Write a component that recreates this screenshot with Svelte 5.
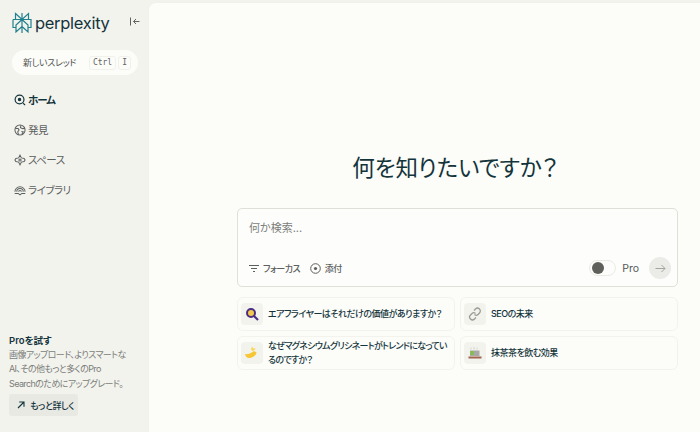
<script>
  const nav = [
    { label: "ホーム", icon: "home", active: true },
    { label: "発見", icon: "globe" },
    { label: "スペース", icon: "space" },
    { label: "ライブラリ", icon: "library" }
  ];

  const suggestions = [
    { text: "エアフライヤーはそれだけの価値がありますか？", icon: "search" },
    { text: "SEOの未来", icon: "link" },
    { text: "なぜマグネシウムグリシネートがトレンドになっているのですか？", icon: "banana", tight: true },
    { text: "抹茶茶を飲む効果", icon: "tea" }
  ];
</script>

<div class="layout">
  <aside class="sidebar">
    <div class="brand">
      <svg class="logo" width="20" height="22" viewBox="0 0 20 22" fill="none" stroke="#20808d" stroke-width="1.200">
        <path d="M10 1v20M3.500 1.500L10 7.500l6.500-6V7.500H3.500zM1 7.500h18v8h-3M1 7.500v8h3M10 7.500L4 13v7l6-5.500M10 7.500L16 13v7l-6-5.500" />
      </svg>
      <span class="wordmark">perplexity</span>
      <svg class="collapse" width="10" height="9" viewBox="0 0 10 9" fill="none" stroke="#5f6260" stroke-width="1">
        <path d="M0.500 0.500v8M9.500 4.500H3.500M6 2L3.500 4.500 6 7" />
      </svg>
    </div>

    <button class="new-thread">
      <span>新しいスレッド</span>
      <span class="keys"><kbd>Ctrl</kbd><kbd>I</kbd></span>
    </button>

    <nav>
      {#each nav as item}
        <div class="nav-item" class:active={item.active}>
          <svg width="12" height="12" viewBox="0 0 13 13" fill="none" stroke="currentColor" stroke-width="1.100">
            {#if item.icon === "home"}
              <circle cx="6" cy="6" r="4.800" stroke-width="1.300" />
              <circle cx="6" cy="6" r="1.300" fill="currentColor" />
              <path d="M10 10l2 2" stroke-width="1.300" />
            {:else if item.icon === "globe"}
              <circle cx="6.500" cy="6.500" r="5.500" />
              <path d="M1.500 5h3l1 1.500-1.500 2 1 3M7.500 1.500L7 4l2.500 1 2.500-.5M8 8l2 .5-1.500 2.500" />
            {:else if item.icon === "space"}
              <path d="M6.500 1.200L8 4.200l3 .6 1 1.700-1 1.700-3 .6-1.500 3-1.500-3-3-.6-1-1.700 1-1.700 3-.6z" />
              <circle cx="6.500" cy="6.500" r="1.200" />
            {:else}
              <path d="M1 8.500a5.500 5.500 0 0 1 11 0M3 8.500a3.500 3.500 0 0 1 7 0M5 8.500a1.500 1.500 0 0 1 3 0" />
              <path d="M0.800 10.200h3.700l2 1.600 2-1.600h3.700" />
            {/if}
          </svg>
          <span>{item.label}</span>
        </div>
      {/each}
    </nav>

    <div class="promo">
      <strong>Proを試す</strong>
      <p>画像アップロード、よりスマートなAI、その他もっと多くのPro<br />Searchのためにアップグレード。</p>
      <button class="learn">
        <svg width="8" height="8" viewBox="0 0 8 8" fill="none" stroke="currentColor" stroke-width="1.100">
          <path d="M1 7l6-6M2.200 1H7v4.800" />
        </svg>
        もっと詳しく
      </button>
    </div>
  </aside>

  <main class="main">
    <h1>何を知りたいですか？</h1>

    <div class="search">
      <div class="placeholder">何か検索...</div>
      <div class="toolbar">
        <span class="tool">
          <svg width="10" height="9" viewBox="0 0 10 9" fill="none" stroke="currentColor" stroke-width="1">
            <path d="M0 1.500h10M2 4.500h6M4 7.500h2" />
          </svg>
          フォーカス
        </span>
        <span class="tool">
          <svg width="11" height="11" viewBox="0 0 11 11" fill="none" stroke="currentColor" stroke-width="1">
            <circle cx="5.500" cy="5.500" r="4.800" />
            <circle cx="5.500" cy="5.500" r="1.600" fill="currentColor" stroke="none" />
          </svg>
          添付
        </span>
        <span class="spacer"></span>
        <span class="toggle"><span class="knob"></span></span>
        <span class="pro">Pro</span>
        <span class="send">
          <svg width="11" height="9" viewBox="0 0 11 9" fill="none" stroke="#a3a59f" stroke-width="1">
            <path d="M0.500 4.500h9.500M6.500 1l3.500 3.500L6.500 8" />
          </svg>
        </span>
      </div>
    </div>

    <div class="suggestions">
      {#each suggestions as s}
        <div class="chip">
          <span class="chip-icon">
            {#if s.icon === "search"}
              <svg width="14" height="14" viewBox="0 0 14 14" fill="none">
                <circle cx="6" cy="6" r="4" fill="#f2c94c" stroke="#4b2e83" stroke-width="2" />
                <path d="M9 9l4 4" stroke="#4b2e83" stroke-width="2.200" />
              </svg>
            {:else if s.icon === "link"}
              <svg width="14" height="14" viewBox="0 0 14 14" fill="none" stroke="#9a9c98" stroke-width="1.300">
                <path d="M6 3.500l1.500-1.500a2.500 2.500 0 0 1 4 4L10 7.500a2.500 2.500 0 0 1-3.500 0" />
                <path d="M8 10.500L6.500 12a2.500 2.500 0 0 1-4-4L4 6.500a2.500 2.500 0 0 1 3.500 0" />
              </svg>
            {:else if s.icon === "banana"}
              <svg width="16" height="14" viewBox="0 0 16 14">
                <path d="M1 8c3 .5 6-.5 9-3l2.500 1.500c.5 2-4 6-8 5.500C2.500 11.800 1.500 10 1 8z" fill="#f6c634" />
                <path d="M7 3l1-2.500L9.500 2.500 12 2.500 10 4.500 8 5z" fill="#f9d65c" />
              </svg>
            {:else}
              <svg width="14" height="14" viewBox="0 0 14 14" fill="none">
                <path d="M3 1.500v2M6 1v2.500M9 1.500v2" stroke="#d5d5d0" />
                <rect x="2" y="4.500" width="9.500" height="5.500" fill="#a8a9a4" />
                <rect x="2.500" y="5" width="3" height="4" fill="#7fc241" />
                <rect x="0.500" y="10.500" width="13" height="2" fill="#a0654f" />
              </svg>
            {/if}
          </span>
          <span class="chip-text" class:tight={s.tight}>{s.text}</span>
        </div>
      {/each}
    </div>
  </main>
</div>

<style>
  :global(body) {
    margin: 0;
    background-color: #f3f3ee;
    font-family: "Inter", "Noto Sans CJK JP", sans-serif;
    font-feature-settings: "palt";
  }

  .layout {
    display: flex;
    width: 700px;
    height: 432px;
    overflow: hidden;
  }

  .sidebar {
    display: flex;
    flex-direction: column;
    width: 149px;
    flex-shrink: 0;
    box-sizing: border-box;
    padding: 11px 12px 16px 12px;
  }

  .brand {
    display: flex;
    align-items: center;
    height: 24px;
  }

  .logo {
    flex-shrink: 0;
  }

  .wordmark {
    margin-left: 3px;
    font-size: 16.500px;
    color: #13343b;
    letter-spacing: -0.3px;
  }

  .collapse {
    margin-left: auto;
    margin-right: -3px;
    margin-bottom: 3px;
  }

  .new-thread {
    display: flex;
    align-items: center;
    justify-content: space-between;
    width: 126px;
    height: 25px;
    margin-top: 15px;
    padding: 0 7px 0 11px;
    border: none;
    border-radius: 13px;
    background-color: #fcfcf9;
    color: #4f5452;
    font-family: inherit;
    font-feature-settings: inherit;
    font-size: 9px;
    letter-spacing: -0.3px;
  }

  .keys {
    display: flex;
    gap: 2px;
  }

  kbd {
    padding: 1px 3px;
    border: 1px solid #f1f1ec;
    border-radius: 3px;
    font-family: "DejaVu Sans Mono", monospace;
    font-size: 8px;
    letter-spacing: 0;
    line-height: 10px;
    color: #5f6260;
  }

  nav {
    display: flex;
    flex-direction: column;
    gap: 11px;
    margin-top: 15px;
    margin-left: 2px;
  }

  .nav-item {
    display: flex;
    align-items: center;
    gap: 2px;
    height: 19px;
    font-size: 10.500px;
    letter-spacing: -0.5px;
    color: #5b605e;
  }

  .nav-item.active {
    color: #13343b;
    font-weight: 700;
    letter-spacing: -1px;
  }

  .promo {
    margin-top: auto;
    margin-left: -3px;
  }

  .promo strong {
    display: block;
    font-size: 9.500px;
    line-height: 14px;
    font-weight: 600;
    color: #13343b;
  }

  .promo p {
    width: 122px;
    margin: 0;
    font-size: 9px;
    letter-spacing: -0.6px;
    line-height: 14.300px;
    color: #7a7d79;
  }

  .learn {
    display: flex;
    align-items: center;
    gap: 5px;
    height: 22px;
    margin-top: 3px;
    padding: 0 4px 0 8px;
    border: none;
    border-radius: 3px;
    background-color: #e9e9e4;
    color: #13343b;
    font-family: inherit;
    font-feature-settings: inherit;
    font-size: 9px;
    letter-spacing: -0.4px;
    font-weight: 500;
  }

  .main {
    flex: 1;
    margin-top: 3px;
    box-sizing: border-box;
    padding: 0 22px 0 88px;
    background-color: #fcfcf9;
    border-top-left-radius: 6px;
    box-shadow: 0 0 1px rgba(0, 0, 0, 0.08);
  }

  h1 {
    margin: 147px 0 0;
    padding-right: 5px;
    text-align: center;
    font-size: 22.500px;
    line-height: 36px;
    font-weight: 400;
    color: #13343b;
  }

  .search {
    display: flex;
    flex-direction: column;
    justify-content: space-between;
    box-sizing: border-box;
    height: 79px;
    margin-top: 22px;
    padding: 11px 6px 7px 11px;
    border: 1.500px solid #dfe0d8;
    border-radius: 5px;
    background-color: #fdfdfb;
  }

  .placeholder {
    font-size: 11px;
    line-height: 16px;
    color: #7b7e7a;
  }

  .toolbar {
    display: flex;
    align-items: center;
    gap: 10px;
  }

  .tool {
    display: flex;
    align-items: center;
    gap: 4px;
    font-size: 9px;
    letter-spacing: -0.6px;
    font-weight: 500;
    color: #5b605e;
  }

  .spacer {
    flex: 1;
  }

  .toggle {
    display: flex;
    align-items: center;
    width: 27px;
    height: 16px;
    box-sizing: border-box;
    padding-left: 2px;
    border: 1px solid #ebebe5;
    border-radius: 8px;
    margin-right: -4px;
  }

  .knob {
    width: 12px;
    height: 12px;
    border-radius: 50%;
    background-color: #5f605c;
  }

  .pro {
    font-size: 10.500px;
    color: #555a58;
  }

  .send {
    display: flex;
    align-items: center;
    justify-content: center;
    width: 22px;
    height: 22px;
    border-radius: 50%;
    background-color: #ebebe7;
  }

  .suggestions {
    display: grid;
    grid-template-columns: 218px 218px;
    grid-auto-rows: 34px;
    gap: 5px;
    margin-top: 10px;
  }

  .chip {
    display: flex;
    align-items: center;
    gap: 5px;
    box-sizing: border-box;
    padding: 0 3px;
    border: 1px solid #f3f3ee;
    border-radius: 6px;
  }

  .chip-icon {
    display: flex;
    align-items: center;
    justify-content: center;
    flex-shrink: 0;
    width: 22px;
    height: 22px;
    border-radius: 4px;
    background-color: #f3f3ee;
  }

  .chip-text {
    font-size: 9px;
    letter-spacing: -0.5px;
    line-height: 14px;
    font-weight: 500;
    color: #13343b;
  }

  .chip-text.tight {
    letter-spacing: -0.7px;
  }
</style>
